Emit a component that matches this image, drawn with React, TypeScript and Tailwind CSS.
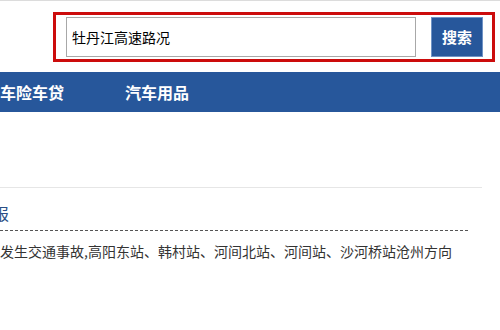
import React from 'react';

const font = { fontFamily: '"Noto Sans CJK SC", "Liberation Sans", sans-serif' };

const App: React.FC = () => {
  return (
    <div className="w-[500px] h-[330px] bg-white overflow-hidden border-t border-[#dcdcdc]" style={font}>
      {/* search box */}
      <div className="pt-[11px] pl-[53px]">
        <div className="w-[442px] h-[50px] border-[3px] border-[#cc0c0c] flex items-start pt-[2px] pl-[10px] gap-[15px]">
          <div className="w-[350px] h-[40px] border border-[#a8a8a8] flex items-center pl-[5px] text-[14px] text-black">
            牡丹江高速路况
          </div>
          <div className="w-[52px] h-[40px] bg-[#27579b] border border-[#6f93c6] flex items-center justify-center text-white text-[15px] font-bold">
            搜索
          </div>
        </div>
      </div>

      {/* nav bar */}
      <div className="mt-[10px] h-[40px] bg-[#27579b] flex items-center text-white text-[16px] font-bold">
        <span className="w-[125px]">车险车贷</span>
        <span>汽车用品</span>
      </div>

      {/* news block */}
      <div className="mt-[75px] w-[482px] border-t border-[#e6e6e6]" />
      <div className="mt-[13px] h-[24px] overflow-hidden flex">
        <span className="ml-[-55px] text-[16px] text-[#2b4f86] leading-[24px]">路况快报</span>
      </div>
      <div className="mt-[5px] w-[468px] border-t border-dashed border-[#555]" />
      <p className="mt-[10px] text-[14px] text-[#333] leading-[20px] whitespace-nowrap">
        发生交通事故,高阳东站、韩村站、河间北站、河间站、沙河桥站沧州方向
      </p>
    </div>
  );
};

export default App;
